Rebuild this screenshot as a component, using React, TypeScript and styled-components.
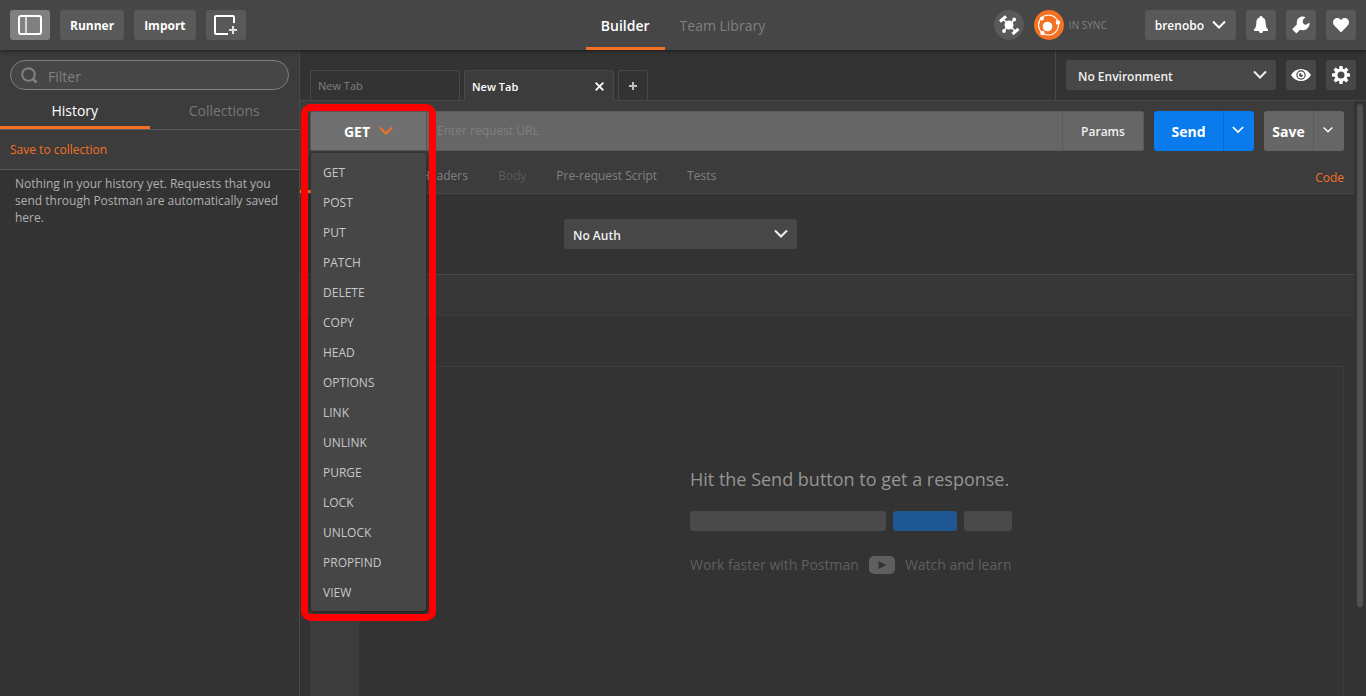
import React from 'react';
import styled, { createGlobalStyle, css } from 'styled-components';
import { FaHeart } from 'react-icons/fa';

const c = {
  bar: '#464646',
  panel: '#3c3c3c',
  page: '#333333',
  line: '#484848',
  softLine: '#3d3d3d',
  orange: '#f47023',
  blue: '#097bed',
  field: '#666666',
  fieldLine: '#5a5a5a',
  dim: '#808080',
};

const GlobalStyle = createGlobalStyle`
  *, *::before, *::after { box-sizing: border-box; }
  body {
    margin: 0;
    background: ${c.page};
    color: #f0f0f0;
    font: 12px/17px "Open Sans", "Noto Sans", sans-serif;
  }
  button, input, select { font: inherit; color: inherit; margin: 0; border: 0; padding: 0; }
  button { background: none; cursor: pointer; }
  a { text-decoration: none; }
  svg { display: block; flex: none; }
  ul { list-style: none; margin: 0; padding: 0; }
`;

const Page = styled.div`
  display: flex;
  flex-direction: column;
  min-height: 100vh;
`;

/* Top bar */
const TopBar = styled.header`
  position: relative;
  display: grid;
  grid-template-columns: 1fr auto 1fr;
  height: 50px;
  padding: 0 10px;
  background: ${c.bar};
  box-shadow: 0 1px 4px rgba(0, 0, 0, 0.5);
`;

const BarGroup = styled.div<{ $end?: boolean }>`
  display: flex;
  align-items: center;
  gap: 10px;
  justify-content: ${(p) => (p.$end ? 'flex-end' : 'flex-start')};
`;

const BarButton = styled.button<{ $active?: boolean; $icon?: boolean }>`
  display: flex;
  align-items: center;
  justify-content: center;
  gap: 8px;
  min-width: ${(p) => (p.$icon ? 30 : 40)}px;
  height: 30px;
  padding: 0 ${(p) => (p.$icon ? 0 : 10)}px;
  border-radius: 3px;
  background: ${(p) => (p.$active ? '#808080' : '#595959')};
  font-weight: 700;
  font-size: 12px;
  color: #fff;
`;

const IconButton = styled(BarButton)`
  width: 40px;
  padding: 0;
`;

const UserButton = styled(BarButton)`
  margin-left: 28px;
  font-weight: 600;
`;

const SyncStatus = styled.div`
  display: flex;
  align-items: center;
  gap: 5px;
  font-size: 10px;
  color: #808080;
`;

const NavTabs = styled.nav`
  display: flex;
`;

const NavTab = styled.a<{ $active?: boolean }>`
  display: flex;
  align-items: center;
  padding: 3px 15px 0;
  border-bottom: 3px solid ${(p) => (p.$active ? c.orange : 'transparent')};
  font-size: 14px;
  font-weight: ${(p) => (p.$active ? 600 : 400)};
  color: ${(p) => (p.$active ? '#fff' : c.dim)};
`;

/* Sidebar */
const Body = styled.div`
  display: flex;
  flex: 1;
`;

const Sidebar = styled.aside`
  flex: 0 0 300px;
  border-right: 1px solid ${c.line};
`;

const SideTop = styled.div`
  background: ${c.panel};
`;

const FilterBox = styled.label`
  display: flex;
  align-items: center;
  gap: 10px;
  height: 30px;
  padding: 0 10px;
  border: 1px solid #808080;
  border-radius: 15px;
  background: ${c.bar};
`;

const FilterInput = styled.input`
  flex: 1;
  min-width: 0;
  padding-top: 2px;
  background: none;
  outline: none;
  font-size: 14px;
  &::placeholder { color: #808080; opacity: 1; }
`;

const FilterWrap = styled.div`
  padding: 10px 10px 0;
`;

const SideTabs = styled.div`
  display: flex;
  border-bottom: 1px solid #5a5a5a;
`;

const SideTab = styled.button<{ $active?: boolean }>`
  flex: 1;
  height: 39px;
  padding-top: 5px;
  border-bottom: 3px solid ${(p) => (p.$active ? c.orange : 'transparent')};
  font-size: 14px;
  color: ${(p) => (p.$active ? '#fff' : '#777')};
`;

const SideAction = styled.div`
  display: flex;
  align-items: center;
  height: 40px;
  padding: 0 10px;
  border-bottom: 1px solid #5a5a5a;
`;

const OrangeLink = styled.a`
  color: ${c.orange};
`;

const EmptyNote = styled.p`
  margin: 0;
  padding: 5px 15px;
  color: #b0b0b0;
`;

/* Request tabs and environment */
const Main = styled.main`
  display: flex;
  flex: 1;
  flex-direction: column;
  min-width: 0;
`;

const TabStrip = styled.div`
  display: flex;
  align-items: stretch;
  height: 51px;
  border-bottom: 1px solid ${c.line};
`;

const RequestTabs = styled.div`
  display: flex;
  flex: 1;
  align-items: flex-end;
  gap: 4px;
  padding-left: 10px;
`;

const RequestTab = styled.button<{ $active?: boolean; $add?: boolean }>`
  display: flex;
  align-items: center;
  justify-content: ${(p) => (p.$add ? 'center' : 'space-between')};
  width: ${(p) => (p.$add ? 30 : 150)}px;
  height: ${(p) => (p.$active ? 31 : 30)}px;
  margin-bottom: ${(p) => (p.$active ? -1 : 0)}px;
  padding: ${(p) => (p.$add ? '0' : '0 9px 0 7px')};
  border: 1px solid ${c.line};
  border-bottom: 0;
  border-radius: 3px 3px 0 0;
  font-size: 11px;
  ${(p) =>
    p.$active
      ? css`background: ${c.panel}; color: #fff; font-weight: 600;`
      : css`color: ${c.dim};`}
`;

const Environment = styled.div`
  display: flex;
  align-items: center;
  gap: 10px;
  padding: 0 10px;
  border-left: 1px solid ${c.line};
`;

const SelectWrap = styled.div<{ $width: number }>`
  display: grid;
  align-items: center;
  width: ${(p) => p.$width}px;
  height: 30px;
  border-radius: 3px;
  background: #474747;
  & > * { grid-area: 1 / 1; }
  & > svg { justify-self: end; margin-right: 9px; pointer-events: none; }
`;

const Select = styled.select<{ $inset: number }>`
  appearance: none;
  width: 100%;
  height: 30px;
  padding: 2px 30px 0 ${(p) => p.$inset}px;
  background: none;
  font-weight: 600;
`;

const EnvButton = styled(BarButton)`
  background: #474747;
`;

/* Workspace */
const Workspace = styled.div`
  display: flex;
  flex: 1;
`;

const Content = styled.div`
  display: flex;
  flex: 1;
  flex-direction: column;
  min-width: 0;
`;

const ScrollTrack = styled.div`
  flex: 0 0 12px;
  padding: 3px 3px 0;
`;

const ScrollThumb = styled.div`
  height: calc(100% - 89px);
  border-radius: 3px;
  background: #505050;
`;

const RequestPanel = styled.section`
  padding-top: 10px;
  background: ${c.panel};
  border-bottom: 1px solid ${c.line};
`;

const RequestRow = styled.div`
  display: flex;
  gap: 10px;
  height: 40px;
  padding: 0 10px;
`;

const UrlGroup = styled.div`
  display: flex;
  flex: 1;
  border-radius: 3px;
  background: ${c.field};
`;

const MethodPicker = styled.div`
  position: relative;
  flex: 0 0 117px;
  border-right: 1px solid ${c.fieldLine};
`;

const MethodButton = styled.button`
  display: flex;
  align-items: center;
  justify-content: center;
  gap: 9px;
  width: 100%;
  height: 40px;
  border: 1px solid ${c.fieldLine};
  border-right: 0;
  border-radius: 3px 0 0 3px;
  background: #707070;
  font-size: 14px;
  font-weight: 700;
  color: #fff;
  & > svg { color: ${c.orange}; }
`;

const MethodMenu = styled.ul`
  position: absolute;
  z-index: 2;
  top: 42px;
  left: 1px;
  width: 115px;
  padding: 4px 0;
  border-radius: 3px;
  background: ${c.bar};
  box-shadow: 0 1px 4px rgba(0, 0, 0, 0.5);
`;

const MethodItem = styled.button`
  display: block;
  width: 100%;
  height: 30px;
  padding: 0 12px;
  text-align: left;
  color: #c8c8c8;
`;

const Highlight = styled.div`
  position: absolute;
  z-index: 3;
  top: -7px;
  left: -9px;
  width: 135px;
  height: 517px;
  border: 7px solid #f00;
  border-radius: 10px;
  pointer-events: none;
`;

const UrlInput = styled.input`
  flex: 1;
  min-width: 0;
  padding: 0 10px 2px;
  border: 1px solid ${c.fieldLine};
  border-width: 1px 0;
  background: none;
  outline: none;
  &::placeholder { color: #808080; opacity: 1; }
`;

const ParamsButton = styled.button`
  flex: 0 0 82px;
  border: 1px solid ${c.fieldLine};
  border-radius: 0 3px 3px 0;
  font-weight: 600;
`;

const SplitButton = styled.div<{ $primary?: boolean }>`
  display: flex;
  border-radius: 3px;
  background: ${(p) => (p.$primary ? c.blue : c.field)};
  color: #fff;
  font-size: 14px;
  font-weight: 700;
  & > button:last-child {
    display: flex;
    align-items: center;
    justify-content: center;
    width: 31px;
    padding: 0 2px 2px 0;
    border-left: 1px solid ${(p) => (p.$primary ? '#066bd0' : c.fieldLine)};
  }
`;

const SplitMain = styled.button<{ $width: number }>`
  width: ${(p) => p.$width}px;
`;

const SectionTabs = styled.div`
  display: flex;
  height: 42px;
  padding-right: 10px;
`;

const SectionTab = styled.button<{ $state?: 'active' | 'disabled' }>`
  min-width: ${(p) => (p.$state === 'active' ? 106 : 0)}px;
  padding: 10px 15px 0;
  border-bottom: 3px solid ${(p) => (p.$state === 'active' ? c.orange : 'transparent')};
  color: ${(p) => (p.$state === 'disabled' ? '#5a5a5a' : c.dim)};
`;

const CodeLink = styled(OrangeLink)`
  margin: 18px 0 0 auto;
`;

const AuthRow = styled.section`
  display: flex;
  align-items: center;
  height: 81px;
  padding-left: 264px;
  border-bottom: 1px solid ${c.line};
`;

const ActionStrip = styled.div`
  height: 41px;
  background: #373737;
  border-bottom: 1px solid ${c.softLine};
`;

const Response = styled.section`
  display: flex;
  flex: 1;
  margin: 50px 10px 0;
  border: 1px solid ${c.softLine};
  border-width: 1px 1px 0 0;
`;

const Gutter = styled.div`
  flex: 0 0 49px;
  background: ${c.panel};
`;

const EmptyResponse = styled.div`
  display: flex;
  flex: 1;
  flex-direction: column;
  align-items: center;
  padding-top: 100px;
`;

const EmptyBlock = styled.div`
  display: flex;
  flex-direction: column;
`;

const Heading = styled.h2`
  margin: 0;
  font-size: 18px;
  line-height: 24px;
  font-weight: 400;
  color: #959595;
`;

const Bars = styled.div`
  display: flex;
  gap: 7px;
  margin: 20px 0 22px;
`;

const Bar = styled.span<{ $width: number; $blue?: boolean }>`
  width: ${(p) => p.$width}px;
  height: 20px;
  border-radius: 3px;
  background: ${(p) => (p.$blue ? '#1e5791' : '#4a4a4a')};
`;

const WatchRow = styled.div`
  display: flex;
  align-items: center;
  gap: 10px;
  font-size: 14px;
  line-height: 24px;
  color: #5f5f5f;
  & > a { color: inherit; }
`;

/* Icons */
const Chevron = ({ size = 14 }: { size?: number }) => (
  <svg width={size} height={size} viewBox="0 0 14 14" fill="none" stroke="currentColor" strokeWidth="2">
    <path d="M1 3.500 7 9.500 13 3.500" />
  </svg>
);

const SidebarIcon = () => (
  <svg width="24" height="20" viewBox="0 0 24 20" fill="none" stroke="#fff" strokeWidth="2">
    <path d="M8 2v16" stroke="#d5d5d5" />
    <rect x="1" y="1" width="22" height="18" rx="2" />
  </svg>
);

const NewWindowIcon = () => (
  <svg width="24" height="20" viewBox="0 0 24 20" fill="none" stroke="#fff" strokeWidth="2">
    <path d="M20 8V2a1 1 0 0 0-1-1H2a1 1 0 0 0-1 1v16a1 1 0 0 0 1 1h12" />
    <path d="M19 11v8M15 15h8" stroke="#e0e0e0" />
  </svg>
);

const SatelliteIcon = () => (
  <svg width="30" height="30" viewBox="0 0 30 30" fill="#fff" stroke="#fff">
    <circle cx="15" cy="15" r="15" fill="#595959" stroke="none" />
    <circle cx="15" cy="15" r="4.500" stroke="none" />
    <path d="M9 9l12 12M20 10 10 20.500" strokeWidth="1.500" />
    <path d="M6 11.500 12 6.300M18.500 24 24.500 18.800" strokeWidth="3" />
    <circle cx="20.200" cy="9.500" r="1.900" stroke="none" />
    <circle cx="10" cy="21" r="1.900" stroke="none" />
  </svg>
);

const SyncIcon = () => (
  <svg width="30" height="30" viewBox="0 0 30 30" fill="#fff">
    <circle cx="15" cy="15" r="15" fill={c.orange} />
    <circle cx="14.500" cy="15" r="10" fill="none" stroke="#fff" strokeWidth="1.200" />
    <circle cx="13.500" cy="16.500" r="4.800" />
    <circle cx="24" cy="12.500" r="2.200" />
    <circle cx="8.500" cy="23" r="2.200" />
    <circle cx="8" cy="8.500" r="2" />
  </svg>
);

const BellIcon = () => (
  <svg width="16" height="18" viewBox="0 0 16 18" fill="#fff">
    <path d="M8 0c1 0 1.500.7 1.500 1.500C12 2.300 12.700 4.500 12.700 7c0 3.500.8 5 2.300 6.500V15H1v-1.500C2.500 12 3.300 10.500 3.300 7c0-2.500.7-4.700 3.200-5.500C6.500.7 7 0 8 0zM6 15h4c0 1.500-.9 2-2 2s-2-.5-2-2z" />
  </svg>
);

const WrenchIcon = () => (
  <svg width="18" height="18" viewBox="0 0 18 18" fill="#fff">
    <path d="M13.500 1C9-.8 4.500 2 4.800 7v1.600L.2 13.200l4.200 4.200L8 13.800C13 15.500 17.800 12 17.600 6.600l-3.100 2C12.500 9 10.500 7.500 10.800 5c.2-1.800 1.600-2.600 2.700-4z" />
  </svg>
);

const EyeIcon = () => (
  <svg width="20" height="14" viewBox="0 0 20 14">
    <path d="M0 7C2.500 3 6 1 10 1s7.500 2 10 6c-2.500 4-6 6-10 6S2.500 11 0 7z" fill="#fff" />
    <circle cx="10" cy="7" r="4.700" fill="#474747" />
    <circle cx="10" cy="7" r="3.500" fill="#fff" />
    <path d="M10 5.200v1.600h2a2 2 0 1 1-2-1.800z" fill="#474747" />
  </svg>
);

const GearIcon = () => (
  <svg width="18" height="18" viewBox="-9 -9 18 18" fill="#fff">
    <circle r="5" fill="none" stroke="#fff" strokeWidth="3" />
    {[0, 45, 90, 135, 180, 225, 270, 315].map((a) => (
      <path key={a} d="M-2-5.500-1.500-9h3L2-5.500z" transform={`rotate(${a})`} />
    ))}
  </svg>
);

const SearchIcon = () => (
  <svg width="17" height="17" viewBox="0 0 17 17" fill="none" stroke="#808080" strokeWidth="2">
    <circle cx="7.500" cy="7.500" r="6.300" />
    <path d="M11.500 11.500 15.500 15.500" strokeWidth="2.600" />
  </svg>
);

const CloseIcon = () => (
  <svg width="9" height="9" viewBox="0 0 9 9" stroke="#fff" strokeWidth="1.800">
    <path d="M.7.7l7.600 7.600M8.300.7.700 8.300" />
  </svg>
);

const PlusIcon = () => (
  <svg width="8" height="8" viewBox="0 0 8 8" stroke="#c0c0c0" strokeWidth="2">
    <path d="M4 0v8M0 4h8" />
  </svg>
);

const PlayIcon = () => (
  <svg width="26" height="18" viewBox="0 0 26 18">
    <rect width="26" height="18" rx="5" fill="#5f5f5f" />
    <path d="M9.500 5v8l8-4z" fill={c.page} />
  </svg>
);

const methods = [
  'GET', 'POST', 'PUT', 'PATCH', 'DELETE', 'COPY', 'HEAD', 'OPTIONS',
  'LINK', 'UNLINK', 'PURGE', 'LOCK', 'UNLOCK', 'PROPFIND', 'VIEW',
];

export default function App() {
  return (
    <Page>
      <GlobalStyle />
      <TopBar>
        <BarGroup>
          <IconButton $active aria-label="Toggle sidebar"><SidebarIcon /></IconButton>
          <BarButton>Runner</BarButton>
          <BarButton>Import</BarButton>
          <IconButton aria-label="New window"><NewWindowIcon /></IconButton>
        </BarGroup>
        <NavTabs>
          <NavTab href="#builder" $active>Builder</NavTab>
          <NavTab href="#library">Team Library</NavTab>
        </NavTabs>
        <BarGroup $end>
          <SatelliteIcon />
          <SyncStatus><SyncIcon />IN SYNC</SyncStatus>
          <UserButton>brenobo<Chevron /></UserButton>
          <BarButton $icon aria-label="Notifications"><BellIcon /></BarButton>
          <BarButton $icon aria-label="Settings"><WrenchIcon /></BarButton>
          <BarButton $icon aria-label="Favorites"><FaHeart size={16} /></BarButton>
        </BarGroup>
      </TopBar>
      <Body>
        <Sidebar>
          <SideTop>
            <FilterWrap>
              <FilterBox>
                <SearchIcon />
                <FilterInput placeholder="Filter" aria-label="Filter" />
              </FilterBox>
            </FilterWrap>
            <SideTabs>
              <SideTab $active>History</SideTab>
              <SideTab>Collections</SideTab>
            </SideTabs>
            <SideAction><OrangeLink href="#save">Save to collection</OrangeLink></SideAction>
          </SideTop>
          <EmptyNote>
            Nothing in your history yet. Requests that you send through Postman are automatically saved here.
          </EmptyNote>
        </Sidebar>
        <Main>
          <TabStrip>
            <RequestTabs>
              <RequestTab>New Tab</RequestTab>
              <RequestTab $active>New Tab<CloseIcon /></RequestTab>
              <RequestTab $add aria-label="Add tab"><PlusIcon /></RequestTab>
            </RequestTabs>
            <Environment>
              <SelectWrap $width={210}>
                <Select $inset={12} aria-label="Environment"><option>No Environment</option></Select>
                <Chevron />
              </SelectWrap>
              <EnvButton $icon aria-label="Environment quick look"><EyeIcon /></EnvButton>
              <EnvButton $icon aria-label="Manage environments"><GearIcon /></EnvButton>
            </Environment>
          </TabStrip>
          <Workspace>
            <Content>
              <RequestPanel>
                <RequestRow>
                  <UrlGroup>
                    <MethodPicker>
                      <MethodButton aria-haspopup="menu" aria-expanded="true">GET<Chevron /></MethodButton>
                      <MethodMenu>
                        {methods.map((m) => (
                          <li key={m}><MethodItem>{m}</MethodItem></li>
                        ))}
                      </MethodMenu>
                      <Highlight />
                    </MethodPicker>
                    <UrlInput placeholder="Enter request URL" aria-label="Request URL" />
                    <ParamsButton>Params</ParamsButton>
                  </UrlGroup>
                  <SplitButton $primary>
                    <SplitMain $width={69}>Send</SplitMain>
                    <button aria-label="Send options"><Chevron size={12} /></button>
                  </SplitButton>
                  <SplitButton>
                    <SplitMain $width={49}>Save</SplitMain>
                    <button aria-label="Save options"><Chevron size={10} /></button>
                  </SplitButton>
                </RequestRow>
                <SectionTabs>
                  <SectionTab $state="active" aria-label="Authorization" />
                  <SectionTab>Headers</SectionTab>
                  <SectionTab $state="disabled">Body</SectionTab>
                  <SectionTab>Pre-request Script</SectionTab>
                  <SectionTab>Tests</SectionTab>
                  <CodeLink href="#code">Code</CodeLink>
                </SectionTabs>
              </RequestPanel>
              <AuthRow>
                <SelectWrap $width={233}>
                  <Select $inset={9} aria-label="Authorization type"><option>No Auth</option></Select>
                  <Chevron />
                </SelectWrap>
              </AuthRow>
              <ActionStrip />
              <Response>
                <Gutter />
                <EmptyResponse>
                  <EmptyBlock>
                    <Heading>Hit the Send button to get a response.</Heading>
                    <Bars>
                      <Bar $width={196} />
                      <Bar $width={64} $blue />
                      <Bar $width={48} />
                    </Bars>
                    <WatchRow>
                      <span>Work faster with Postman</span>
                      <PlayIcon />
                      <a href="#watch">Watch and learn</a>
                    </WatchRow>
                  </EmptyBlock>
                </EmptyResponse>
              </Response>
            </Content>
            <ScrollTrack><ScrollThumb /></ScrollTrack>
          </Workspace>
        </Main>
      </Body>
    </Page>
  );
}
